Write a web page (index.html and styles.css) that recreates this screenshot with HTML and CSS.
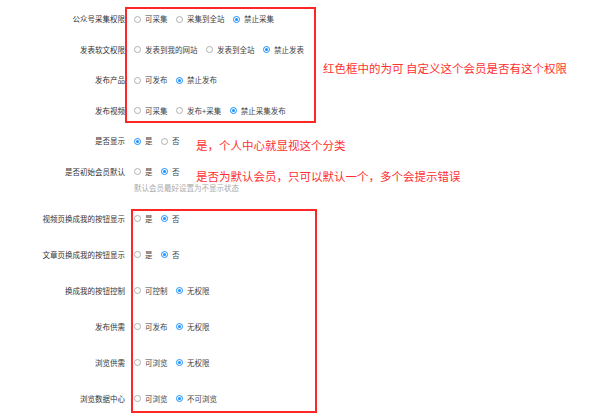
FILE: index.html
```html
<!DOCTYPE html>
<html lang="zh">
<head>
<meta charset="utf-8">
<link rel="stylesheet" href="styles.css">
</head>
<body>
<div class="page">
  <div class="form">
    <div class="group g1">
      <div class="row"><div class="label">公众号采集权限</div><div class="opts"><span class="opt"><i class="radio"></i>可采集</span><span class="opt"><i class="radio"></i>采集到全站</span><span class="opt"><i class="radio on"></i>禁止采集</span></div></div>
      <div class="row"><div class="label">发表软文权限</div><div class="opts"><span class="opt"><i class="radio"></i>发表到我的网站</span><span class="opt"><i class="radio"></i>发表到全站</span><span class="opt"><i class="radio on"></i>禁止发表</span></div></div>
      <div class="row"><div class="label">发布产品</div><div class="opts"><span class="opt"><i class="radio"></i>可发布</span><span class="opt"><i class="radio on"></i>禁止发布</span></div></div>
      <div class="row"><div class="label">发布视频</div><div class="opts"><span class="opt"><i class="radio"></i>可采集</span><span class="opt"><i class="radio"></i>发布+采集</span><span class="opt"><i class="radio on"></i>禁止采集发布</span></div></div>
      <div class="row"><div class="label">是否显示</div><div class="opts"><span class="opt"><i class="radio on"></i>是</span><span class="opt"><i class="radio"></i>否</span></div></div>
      <div class="row"><div class="label">是否初始会员默认</div><div class="opts"><span class="opt"><i class="radio"></i>是</span><span class="opt"><i class="radio on"></i>否</span></div></div>
    </div>
    <div class="hint">默认会员最好设置为不显示状态</div>
    <div class="group g2">
      <div class="row"><div class="label">视频页换成我的按钮显示</div><div class="opts"><span class="opt"><i class="radio"></i>是</span><span class="opt"><i class="radio on"></i>否</span></div></div>
      <div class="row"><div class="label">文章页换成我的按钮显示</div><div class="opts"><span class="opt"><i class="radio"></i>是</span><span class="opt"><i class="radio on"></i>否</span></div></div>
      <div class="row"><div class="label">换成我的按钮控制</div><div class="opts"><span class="opt"><i class="radio"></i>可控制</span><span class="opt"><i class="radio on"></i>无权限</span></div></div>
      <div class="row"><div class="label">发布供需</div><div class="opts"><span class="opt"><i class="radio"></i>可发布</span><span class="opt"><i class="radio on"></i>无权限</span></div></div>
      <div class="row"><div class="label">浏览供需</div><div class="opts"><span class="opt"><i class="radio"></i>可浏览</span><span class="opt"><i class="radio on"></i>无权限</span></div></div>
      <div class="row"><div class="label">浏览数据中心</div><div class="opts"><span class="opt"><i class="radio"></i>可浏览</span><span class="opt"><i class="radio on"></i>不可浏览</span></div></div>
    </div>
  </div>
  <div class="box box1"></div>
  <div class="box box2"></div>
  <div class="note note1">红色框中的为可 自定义这个会员是否有这个权限</div>
  <div class="note note2">是，个人中心就显视这个分类</div>
  <div class="note note3">是否为默认会员，只可以默认一个，多个会提示错误</div>
</div>
</body>
</html>
```

FILE: styles.css
```css
html, body {
  margin: 0;
  padding: 0;
  background: #fff;
}
body {
  font-family: "Noto Sans CJK SC", "Noto Sans", sans-serif;
  width: 600px;
  height: 419px;
  overflow: hidden;
}
.page {
  position: relative;
  width: 600px;
  height: 419px;
}
.form {
  padding-top: 13px;
  display: flex;
  flex-direction: column;
}
.group {
  display: flex;
  flex-direction: column;
}
.g1 { gap: 18.6px; }
.g2 { gap: 24px; margin-top: 20px; }
.row {
  display: flex;
  align-items: center;
  height: 12px;
  gap: 9px;
}
.label {
  width: 125px;
  text-align: right;
  font-size: 7.5px;
  line-height: 12px;
  color: #333;
  white-space: nowrap;
}
.opts {
  display: flex;
  align-items: center;
  gap: 8.5px;
}
.opt {
  display: flex;
  align-items: center;
  gap: 4px;
  font-size: 7.5px;
  line-height: 12px;
  color: #444;
  white-space: nowrap;
}
.radio {
  display: block;
  width: 7px;
  height: 7px;
  box-sizing: border-box;
  border: 1px solid #b0b0b0;
  border-radius: 50%;
  background: #fff;
  position: relative;
}
.radio.on {
  border-color: #1890ff;
}
.radio.on::after {
  content: "";
  position: absolute;
  left: 1px;
  top: 1px;
  width: 3px;
  height: 3px;
  border-radius: 50%;
  background: #1890ff;
}
.hint {
  margin-top: 5px;
  margin-left: 134px;
  font-size: 7.5px;
  line-height: 10px;
  color: #aaa;
}
.box {
  position: absolute;
  border: 2px solid #ff2626;
  box-sizing: border-box;
}
.box1 { left: 125px; top: 7px; width: 191px; height: 116px; }
.box2 { left: 131px; top: 209px; width: 186px; height: 204px; }
.note {
  position: absolute;
  font-size: 11.5px;
  line-height: 12px;
  color: #ff3030;
  white-space: nowrap;
}
.note1 { left: 323px; top: 62px; }
.note2 { left: 196px; top: 139px; }
.note3 { left: 196px; top: 170px; }
```
